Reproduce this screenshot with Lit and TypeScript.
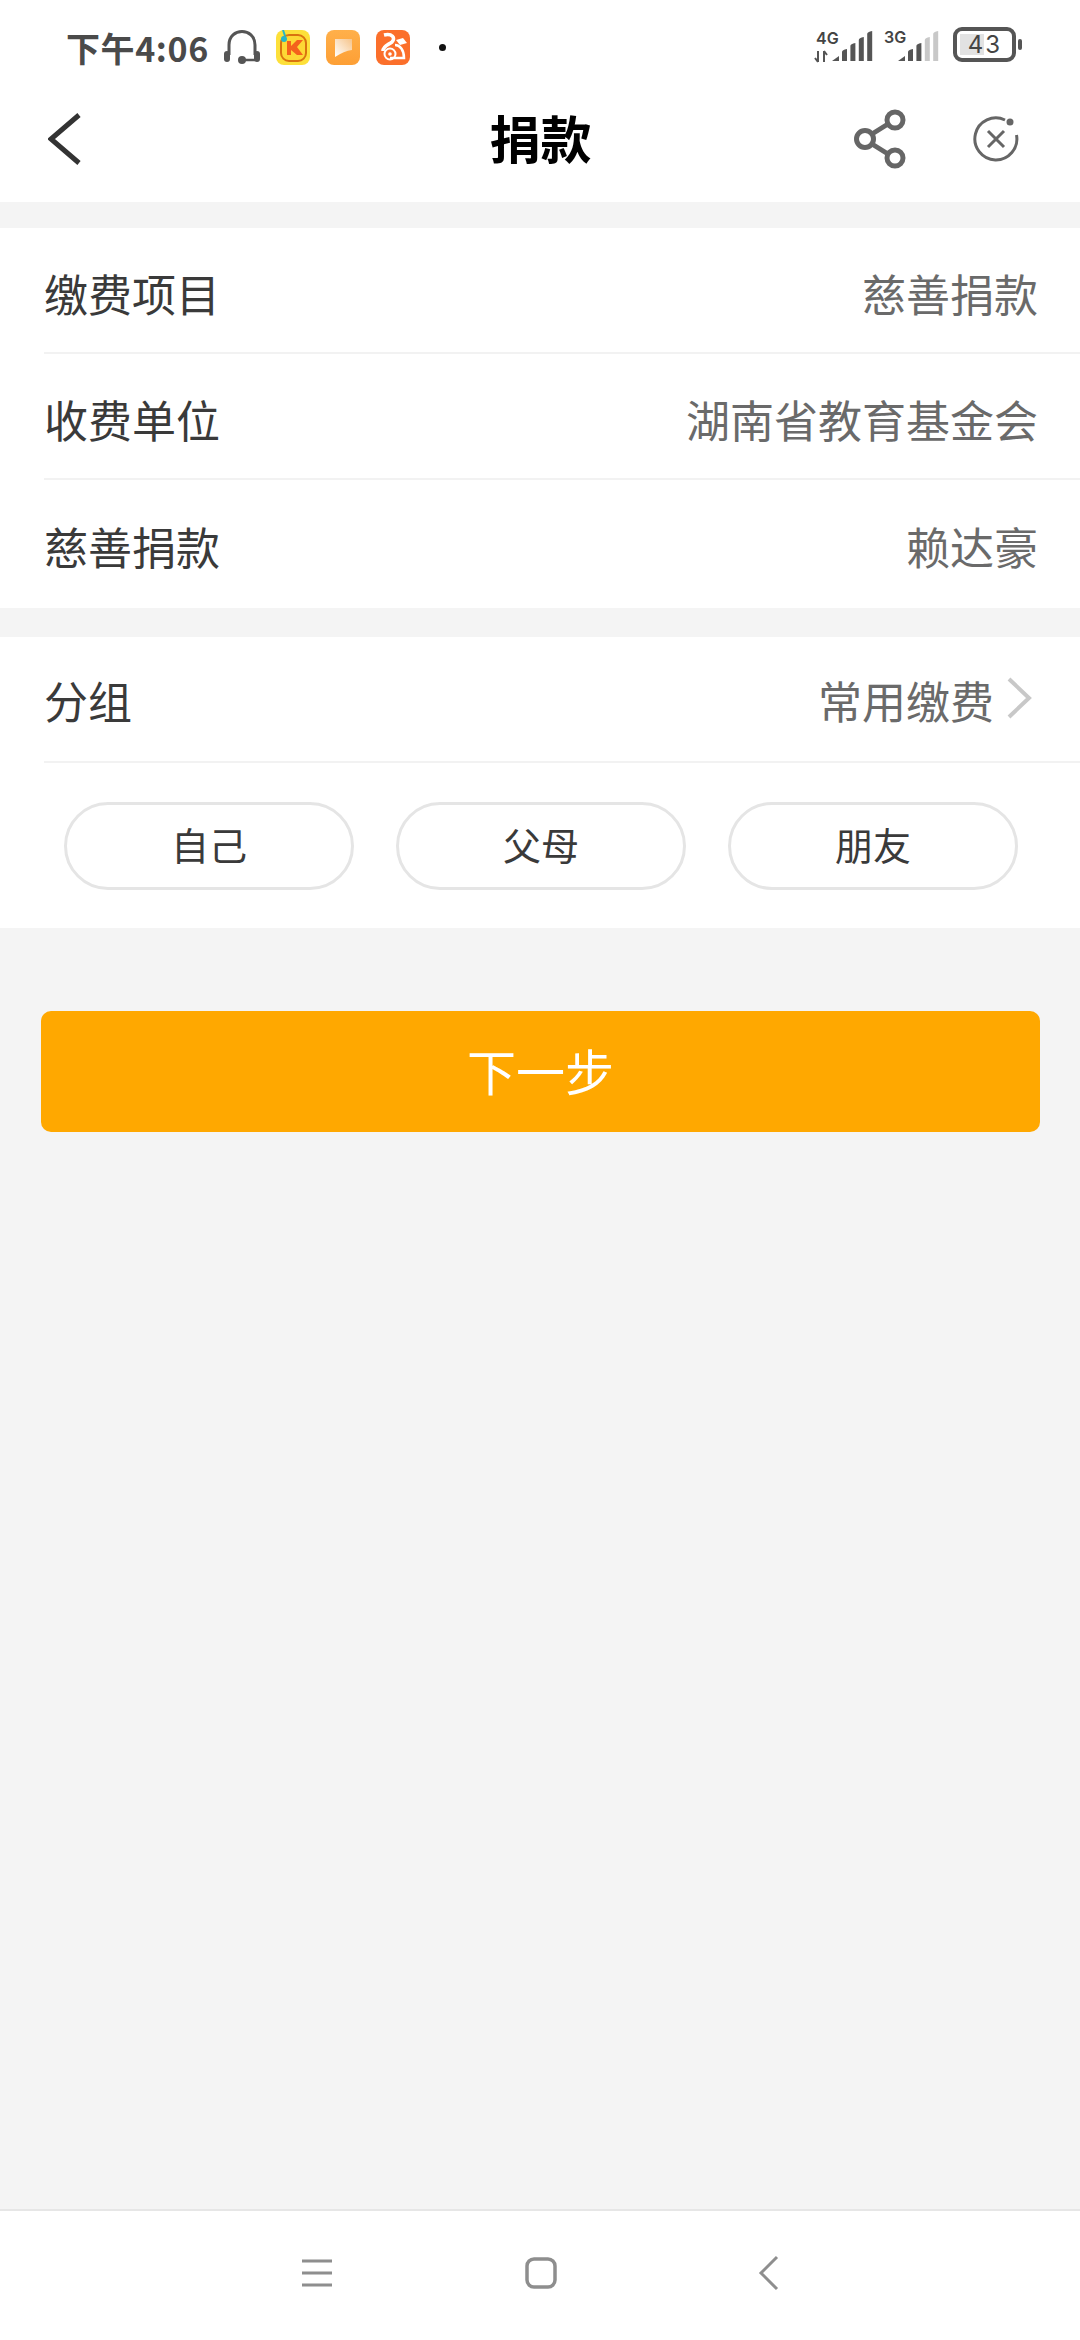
import { LitElement, html, css, svg } from "lit";
import { customElement } from "lit/decorators.js";

const rows = [
  ["缴费项目", "慈善捐款"],
  ["收费单位", "湖南省教育基金会"],
  ["慈善捐款", "赖达豪"],
];

const bars = (x: number, cols: string[]) => svg`
  <path d="M${x} 34 L${x + 7} 29 V34 Z" fill="${cols[0]}"/>
  ${[0, 1, 2, 3].map((i) => {
    const bx = x + 10 + i * 8.4;
    const top = 23 - i * 6;
    return svg`<path d="M${bx} 34 V${top + 2} Q${bx} ${top} ${bx + 5} ${top - 1} V34 Z" fill="${cols[i + 1]}"/>`;
  })}`;

@customElement("app-root")
export class AppRoot extends LitElement {
  static styles = css`
    :host {
      display: flex;
      flex-direction: column;
      width: 1080px;
      height: 2340px;
      background: #f4f4f4;
      font-family: "Noto Sans CJK SC", "Noto Sans", sans-serif;
      color: #3a3a3a;
      overflow: hidden;
    }
    .head { background: #fff; height: 202px; flex: none; }
    .status {
      height: 75px;
      display: flex;
      align-items: center;
      padding: 20px 58px 0 66px;
      box-sizing: border-box;
    }
    .time { font-size: 34px; font-weight: 700; color: #4a4a4a; line-height: 40px; letter-spacing: 0.6px; width: 143px; white-space: nowrap; }
    .sicons { display: flex; align-items: center; gap: 16px; margin-left: 15px; margin-top: -1px; }
    .sicons svg { display: block; }
    .dot { width: 7px; height: 7px; border-radius: 50%; background: #111; margin-left: 29px; margin-top: -1px; }
    .right { margin-left: auto; display: block; margin-top: 2px; }
    .bar { height: 127px; display: flex; align-items: center; position: relative; padding: 0 48px; }
    .title {
      position: absolute; left: 1px; right: 0; top: 34px; text-align: center;
      font-size: 51px; font-weight: 700; color: #000; line-height: 56px;
    }
    .bar svg { display: block; flex: none; }
    .bar .acts { margin-left: auto; display: flex; align-items: center; gap: 65px; margin-right: 13px; }
    .sec { background: #fff; }
    .s1 { margin-top: 26px; height: 380px; }
    .s2 { margin-top: 29px; height: 291px; }
    .row {
      height: 126px; box-sizing: border-box; margin-left: 44px;
      padding: 5px 42px 0 0; border-bottom: 2px solid #f2f2f2;
      display: flex; align-items: center; justify-content: space-between;
      font-size: 44px; line-height: 60px;
    }
    .row.last { border-bottom: none; }
    .row.group { padding: 2px 0 0; }
    .val { color: #6a6a6a; }
    .grp { display: flex; align-items: center; }
    .grp svg { display: block; margin-left: 12px; margin-right: 46px; margin-top: -4px; }
    .chips { display: flex; gap: 42px; padding: 39px 62px 0 64px; }
    .chip {
      flex: 1; height: 88px; box-sizing: border-box; border: 3px solid #e5e5e5;
      border-radius: 44px; display: flex; align-items: center; justify-content: center;
      font-size: 38px; padding-bottom: 5px;
    }
    .main { flex: 1; }
    .btn {
      margin: 83px 40px 0 41px; height: 121px; box-sizing: border-box; padding-bottom: 5px;
      background: #ffa800; border-radius: 10px;
      color: #fff; font-size: 49px; display: flex; align-items: center; justify-content: center;
    }
    .nav {
      flex: none; height: 131px; box-sizing: border-box; background: #fff;
      border-top: 2px solid #e6e6e6; position: relative;
      display: flex; align-items: center; padding: 0 0 5px 300px;
    }
    .nav svg { display: block; flex: none; }
    .home { margin-left: 190px; }
    .back { margin-left: 200px; }
  `;

  render() {
    return html`
      <div class="head">
        <div class="status">
          <div class="time">下午4:06</div>
          <div class="sicons">
            <svg width="36" height="34" viewBox="0 0 36 34" fill="none">
              <path d="M5 25 V15 C5 -3 31 -3 31 15 V25" stroke="#555" stroke-width="3"/>
              <rect x="0" y="21" width="6" height="11" rx="3" fill="#555"/>
              <rect x="30" y="21" width="6" height="11" rx="3" fill="#555"/>
              <path d="M18 30 H31" stroke="#555" stroke-width="2.5"/>
              <circle cx="18" cy="30" r="4" fill="#555"/>
            </svg>
            <svg width="34" height="35" viewBox="0 0 34 35">
              <rect width="34" height="35" rx="8" fill="#fde03a"/>
              <rect x="5" y="5" width="25" height="26" rx="8" fill="#fdd835" stroke="#d9730f" stroke-width="2"/>
              <path d="M11 11 H15 V16 L21 10 H27 L21 17 L27 25 H21 L15 20 V25 H11 Z" fill="#f4621c"/>
              <circle cx="8" cy="9" r="3" fill="#28b6c8"/><path d="M7 0 L9 6" stroke="#28b6c8" stroke-width="2"/>
            </svg>
            <svg width="34" height="35" viewBox="0 0 34 35">
              <defs>
                <linearGradient id="o" x1="0" y1="0" x2="0" y2="1"><stop offset="0" stop-color="#ffb04a"/><stop offset="1" stop-color="#fd9f35"/></linearGradient>
                <linearGradient id="p" x1="0" y1="1" x2="1" y2="0"><stop offset="0" stop-color="#fff"/><stop offset="1" stop-color="#f6c48a"/></linearGradient>
              </defs>
              <rect width="34" height="35" rx="8" fill="url(#o)"/>
              <path d="M9 9 H26 V20 Q18 21 9 27 Z" fill="url(#p)"/>
            </svg>
            <svg width="34" height="35" viewBox="0 0 34 35" fill="none">
              <rect width="34" height="35" rx="8" fill="#fb6f2b"/>
              <path d="M8 5 C16 3 20 8 16 12 C12 15 7 16 7 21" stroke="#fff" stroke-width="3.5"/>
              <circle cx="14" cy="24" r="5.5" stroke="#fff" stroke-width="2"/>
              <circle cx="14" cy="24" r="1.8" fill="#fff"/>
              <path d="M19 15 C24 15 28 20 28 28 H14" stroke="#fff" stroke-width="2.5"/>
              <path d="M20 10 L27 8 L31 13 L24 15 Z" fill="#fff"/>
            </svg>
          </div>
          <div class="dot"></div>
          <svg class="right" width="210" height="44" viewBox="0 0 210 44" fill="none">
            <text x="4" y="17" font-family="Inter, 'Liberation Sans', sans-serif" font-size="16" font-weight="600" fill="#444">4G</text>
            <path d="M6 24 V35 M6 35 L3 31 M12 35 V24 M12 24 L15 28" stroke="#555" stroke-width="2"/>
            ${bars(20, ["#555", "#555", "#555", "#555", "#555"])}
            <text x="72" y="16" font-family="Inter, 'Liberation Sans', sans-serif" font-size="16" font-weight="600" fill="#444">3G</text>
            ${bars(86, ["#555", "#555", "#555", "#c8c8c8", "#c8c8c8"])}
            <rect x="143" y="2" width="59" height="31" rx="7" stroke="#555" stroke-width="4"/>
            <rect x="148" y="7" width="24" height="21" fill="#e2e2e2"/>
            <text x="173" y="26" text-anchor="middle" font-family="Inter, 'Liberation Sans', sans-serif" font-size="24" letter-spacing="2" fill="#444">43</text>
            <rect x="206" y="12" width="4" height="11" rx="2" fill="#555"/>
          </svg>
        </div>
        <div class="bar">
          <svg width="34" height="52" viewBox="0 0 34 52" fill="none">
            <path d="M31 2 L3 26 L31 50" stroke="#333" stroke-width="5"/>
          </svg>
          <div class="title">捐款</div>
          <div class="acts">
            <svg width="54" height="60" viewBox="0 0 54 60" fill="none" stroke="#666" stroke-width="5">
              <circle cx="11" cy="30" r="8.5"/>
              <circle cx="41" cy="11" r="8"/>
              <circle cx="41" cy="49" r="8"/>
              <path d="M18 25 L34 15 M18 35 L34 45"/>
            </svg>
            <svg width="46" height="46" viewBox="0 0 46 46" fill="none" stroke="#666" stroke-width="3">
              <path d="M32 4 A21 21 0 1 0 43.5 19"/>
              <path d="M15 15 L31 31 M31 15 L15 31"/>
              <circle cx="37" cy="6" r="3.5" fill="#666" stroke="none"/>
            </svg>
          </div>
        </div>
      </div>
      <div class="main">
        <div class="sec s1">
          ${rows.map(
            ([a, b], i) => html`<div class="row ${i === 2 ? "last" : ""}"><span>${a}</span><span class="val">${b}</span></div>`
          )}
        </div>
        <div class="sec s2">
          <div class="row group">
            <span>分组</span>
            <span class="val grp">常用缴费
              <svg width="28" height="44" viewBox="0 0 28 44" fill="none">
                <path d="M3 3 L23 22 L3 41" stroke="#c8c8c8" stroke-width="4"/>
              </svg>
            </span>
          </div>
          <div class="chips">
            <div class="chip">自己</div>
            <div class="chip">父母</div>
            <div class="chip">朋友</div>
          </div>
        </div>
        <div class="btn">下一步</div>
      </div>
      <div class="nav">
        <svg width="34" height="30" viewBox="0 0 34 30" fill="none" stroke="#8e8e8e" stroke-width="3">
          <path d="M2 3 H32 M2 15 H32 M2 27 H32"/>
        </svg>
        <svg class="home" width="34" height="34" viewBox="0 0 34 34" fill="none">
          <rect x="3" y="3" width="28" height="28" rx="7" stroke="#8e8e8e" stroke-width="3.5"/>
        </svg>
        <svg class="back" width="22" height="36" viewBox="0 0 22 36" fill="none">
          <path d="M19 2 L3 18 L19 34" stroke="#8e8e8e" stroke-width="3"/>
        </svg>
      </div>
    `;
  }
}
